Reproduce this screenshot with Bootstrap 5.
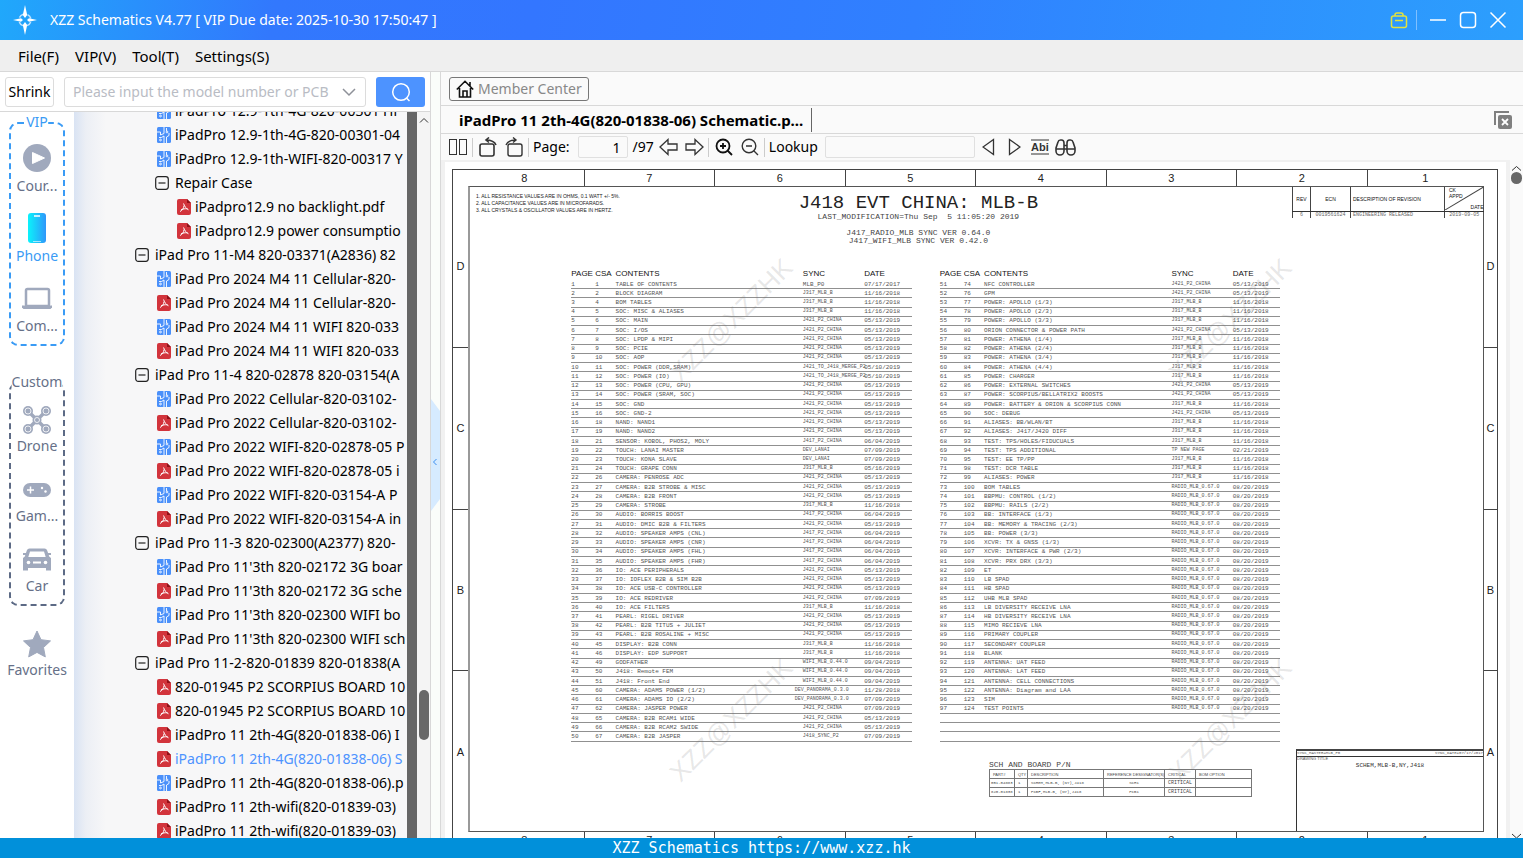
<!DOCTYPE html>
<html lang="en">
<head>
<meta charset="utf-8">
<meta name="viewport" content="width=device-width, initial-scale=1">
<title>XZZ Schematics V4.77</title>
<link href="https://cdn.jsdelivr.net/npm/bootstrap@5.3.0/dist/css/bootstrap.min.css" rel="stylesheet">
<style>
  body { font: 14px/20px "Noto Sans", "Open Sans", sans-serif; color: #000; background: #fff; }
  button, input { font: inherit; }
  svg { display: block; flex: none; }
  .line-b { border-bottom: 1px solid #d8d8d8; }
  .icon-btn { background: none; border: 0; padding: 0; color: #333; }

  .title-bar { height: 40px; background: linear-gradient(100deg, #20a8fb 0, #3278fd 18%, #3376ff 35%, #3080ff 60%, #2c9ffd 100%); color: #fff; font-size: 14px; }
  .title-bar .icon-btn { color: #fff; }
  .title-sep { width: 1px; height: 20px; background: #7fc0ff; }
  .menu-bar { height: 32px; background: #efefef; padding-left: 18px; gap: 16px; font-size: 15px; }
  .menu-bar a { color: #000; text-decoration: none; }

  .side-panel { width: 431px; border-right: 1px solid #d8d8d8; }
  .search-bar { height: 40px; padding: 0 5px; }
  .shrink-btn { width: 49px; height: 30px; border: 1px solid #dcdcdc; border-radius: 3px; background: #fff; padding: 0; }
  .model-box { height: 30px; margin: 0 10px; border: 1px solid #dcdcdc; border-radius: 3px; padding: 0 9px 0 8px; }
  .model-box input { border: 0; outline: 0; min-width: 0; padding: 0; color: #333; }
  .model-box input::placeholder { color: #b9bcc4; opacity: 1; }
  .search-btn { width: 49px; height: 30px; border: 0; border-radius: 3px; background: #4d93ff; color: #fff; }

  .cat-rail { width: 74px; padding: 10px 9px 0; color: #667088; }
  .cat-group { border: 2px dashed #5c6a85; border-radius: 9px; padding: 18px 0 6px; gap: 14px; }
  .cat-group.vip { border-color: #3a9bf5; }
  .cat-name { top: -12px; left: 50%; transform: translateX(-50%); background: #fff; line-height: 20px; }
  .vip .cat-name { color: #3a9bf5; }
  .cat-item { background: none; border: 0; padding: 0; color: inherit; line-height: 24px; }
  .cat-item svg { width: 32px; height: 32px; margin: 0 auto; color: #a0a9bd; }
  .cat-item.on { color: #3a9bf5; }
  .custom-group { margin-top: 36px; }
  .fav { margin-top: 20px; white-space: nowrap; }

  .tree-pane { background: linear-gradient(90deg, #d9e3f3 0, #eceff5 12px, #f7f7f8 32px); }
  .tree-list { list-style: none; margin: -13px 1px 0 0; padding: 0; }
  .tree-list li { height: 24px; gap: 4px; white-space: nowrap; }
  .lv1 { padding-left: 61px; }
  .lv2 { padding-left: 81px; }
  .leaf { padding-left: 83px; }
  .deep { padding-left: 103px; }
  .tree-list .lv1, .tree-list .lv2 { gap: 6px; }
  .chosen { color: #4d93ff; }
  .dark-bar { width: 10px; background: #666; }
  .scroll-col { width: 13px; background: #f4f4f4; }
  .scroll-thumb { width: 10px; height: 50px; border-radius: 5px; background: #686868; top: 578px; right: 1px; }
  .splitter { width: 9px; background: #fafdfa; }
  .split-grip { top: 298px; left: 0; }

  .doc-panel { border-left: 1px solid #d8d8d8; background: #fafafa; }
  .member-row { height: 34px; padding: 0 8px; }
  .member-btn { height: 24px; border: 1px solid #777; border-radius: 3px; background: #fafafa; color: #888; padding: 0 6px; gap: 4px; line-height: 20px; font-size: 14px; }
  .tab-row { height: 28px; padding-right: 10px; }
  .doc-tab { height: 24px; border: 0; border-right: 1px solid #666; background: none; font-weight: 700; font-size: 15px; padding: 0 8px 0 18px; }
  .tool-row { height: 26px; padding-left: 7px; gap: 5px; font-size: 14px; }
  .tool-sep { width: 1px; height: 19px; background: #ccc; margin: 0 -1px; }
  .tool-row input { height: 22px; border: 1px solid #e0e0e0; border-radius: 2px; background: #fafafa; padding: 0 6px; }
  .tool-row .page-no { width: 50px; text-align: right; margin-left: 3px; }
  .tool-row .look-for { width: 150px; margin: 0 2px; }

  .canvas-area { background: #f1f1f1; padding: 2px 4px 0; }
  .page-scroll { width: 13px; background: #fafafa; }
  .page-dot { width: 11px; height: 12px; border-radius: 6px; background: #686868; }

  .sheet { background: #fff; padding: 7px 8px 7px 7px; color: #222; }
  .sheet, .sans { font-family: "Liberation Sans", Arial, sans-serif; }
  .mono, .sheet .mono { font-family: "Liberation Mono", "Courier New", monospace; }
  .sheet-frame { border: 1px solid #444; }
  .zone-strip { display: grid; grid-template-columns: repeat(8, minmax(0, 1fr)); height: 16px; font-size: 11px; line-height: 16px; text-align: center; }
  .zone-strip span + span { border-left: 1px solid #444; }
  .zone-strip span:first-child { padding-left: 12px; }
  .zone-strip span:last-child { padding-right: 14px; }
  .zone-rail { width: 15px; font-size: 11px; }
  .zone-rail.right { width: 13px; }
  .zone-rail span { flex: 1 1 0; }
  .zone-rail span + span { border-top: 1px solid #444; }
  .drawing { border: 1px solid #555; border-left: 2px solid #999; }
  .head-grid { display: grid; grid-template-columns: 260fr 380fr 185fr 191px; height: 81px; }
  .notes { font-size: 5px; line-height: 7px; padding: 6px 0 0 6px; }
  .plan-title { font-size: 19px; line-height: 20px; margin: 6px 0 0; font-weight: 400; }
  .plan-sub { font-size: 8px; line-height: 8px; color: #444; }
  .mod-line { white-space: pre; }
  .rev-table { width: 191px; table-layout: fixed; font-size: 5px; line-height: 6px; border-collapse: collapse; }
  .rev-table th, .rev-table td { border-left: 1px solid #444; padding: 0 2px; font-weight: 400; white-space: nowrap; }
  .rev-table th { height: 24px; border-bottom: 1px solid #333; color: #111; }
  .rev-table td { height: 7px; color: #666; }
  .toc-wrap { padding: 0 20% 0 10%; gap: 28px; }
  .toc { table-layout: fixed; flex: 1 1 0; width: 0; height: 474px; border-collapse: collapse; font-size: 6px; line-height: 7px; color: #555; }
  .toc th { font-size: 8px; line-height: 10px; height: 12px; font-weight: 400; padding: 0; color: #111; font-family: "Liberation Sans", Arial, sans-serif; white-space: nowrap; }
  .toc td { padding: 0; white-space: nowrap; border-bottom: 1px solid #909090; }
  .toc .tiny { font-size: 5px; }
  .toc .pulled span { margin-left: -8px; }
  .foot-row { margin-top: 7px; }
  .pn-block { margin-left: auto; margin-right: 44px; padding-top: 11px; }
  .pn-title { font-size: 8px; line-height: 9px; color: #444; }
  .pn-table { width: 262px; table-layout: fixed; border-collapse: collapse; font-size: 4px; line-height: 5px; color: #444; }
  .pn-table th, .pn-table td { border: 1px solid #777; height: 9px; padding: 0 3px; font-weight: 400; white-space: nowrap; }
  .pn-table td:first-child { padding: 0 1px; }
  .pn-table .crit { font-size: 5px; }
  .title-block { width: 187px; height: 82px; border-left: 1px solid #333; border-top: 2px solid #444; font-size: 4px; line-height: 4px; color: #555; }
  .title-block .strip { border-bottom: 1px solid #333; height: 6px; }
  .title-block .sheet-name { font-size: 6px; line-height: 10px; color: #333; }
  .stamp { font-size: 26px; line-height: 26px; color: rgba(110,110,110,.17); transform: translate(-50%, -50%) rotate(-45deg); pointer-events: none; }
  .stamp.west { left: 27%; }
  .stamp.east { left: 74%; }
  .stamp.north { top: 158px; }
  .stamp.south { top: 558px; }
  .status-bar { height: 20px; background: #0190da; color: #fff; font: 15px/20px "DejaVu Sans Mono", monospace; }
</style>
</head>
<body class="vh-100 d-flex flex-column overflow-hidden">
<svg class="d-none" aria-hidden="true">
  <symbol id="i-pcb" viewBox="0 0 14 16"><rect width="14" height="16" rx="1.500" fill="#4a90fa"/><g fill="none" stroke="#fff" stroke-width=".9"><path d="M0 5h3.500V8L7 6.500V0M2 10.500h2.500L7 9V16M9.500 1v3M9.500 16V10L12 8.500V6"/><circle cx="10" cy="5" r=".9"/><circle cx="3.500" cy="13" r=".9"/></g></symbol>
  <symbol id="i-pdf" viewBox="0 0 14 16"><path d="M2 0h8l4 4v10a2 2 0 0 1-2 2H2a2 2 0 0 1-2-2V2a2 2 0 0 1 2-2z" fill="#d2343c"/><path d="M10 0v4h4z" fill="#8f1118"/><path d="M6.500 4.500c1.500 3.500 2.500 5 5 6.300M7 6.500c-.2 2.800-1.500 4.800-4 6M4 10.800c2-.9 4-1.200 6.500-1" fill="none" stroke="#fff" stroke-width="1"/></symbol>
  <symbol id="i-minus" viewBox="0 0 14 14"><rect x=".7" y=".7" width="12.600" height="12.600" rx="2.500" fill="none" stroke="#222" stroke-width="1.200"/><path d="M3.500 7h7" stroke="#222" stroke-width="1.200"/></symbol>
</svg>

<header class="title-bar d-flex align-items-center px-2 flex-shrink-0">
  <svg class="ms-1" width="26" height="30" viewBox="0 0 26 30"><circle cx="13" cy="15" r="6" fill="none" stroke="#bfe2ff" stroke-width="1.500" stroke-dasharray="5 4.400" stroke-dashoffset="-2"/><path d="M13 0l2.200 10L13 13l-2.200-3zM13 30l2.200-10L13 17l-2.200 3zM1 15l8-1.800L11 15l-2 1.800zM25 15l-8-1.800L15 15l2 1.800z" fill="#fff"/></svg>
  <span class="ms-2 ps-1">XZZ Schematics V4.77 [ VIP Due date: 2025-10-30 17:50:47 ]</span>
  <div class="d-flex align-items-center ms-auto pe-2">
    <button class="icon-btn" aria-label="Toolbox"><svg width="18" height="18" viewBox="0 0 18 18" fill="none" stroke="#e3e23c" stroke-width="1.500"><rect x="1.500" y="5" width="15" height="11.500" rx="2"/><path d="M5 5V4a2 2 0 0 1 2-2h4a2 2 0 0 1 2 2v1M5 9.500h8"/></svg></button>
    <span class="title-sep ms-2 me-2"></span>
    <button class="icon-btn ms-1" aria-label="Minimize"><svg width="18" height="18" viewBox="0 0 18 18"><path d="M1 9h16" stroke="currentColor" stroke-width="1.500"/></svg></button>
    <button class="icon-btn ms-2 ps-1" aria-label="Maximize"><svg width="18" height="18" viewBox="0 0 18 18"><rect x="1.500" y="1.500" width="15" height="15" rx="3" fill="none" stroke="currentColor" stroke-width="1.500"/></svg></button>
    <button class="icon-btn ms-2 ps-1" aria-label="Close"><svg width="18" height="18" viewBox="0 0 18 18"><path d="M1.500 1.500l15 15M16.500 1.500l-15 15" stroke="currentColor" stroke-width="1.500"/></svg></button>
  </div>
</header>
<nav class="menu-bar line-b d-flex align-items-center flex-shrink-0">
  <a href="#">File(F)</a><a href="#">VIP(V)</a><a href="#">Tool(T)</a><a href="#">Settings(S)</a>
</nav>

<div class="d-flex flex-grow-1 overflow-hidden">
  <aside class="side-panel d-flex flex-column flex-shrink-0">
    <div class="search-bar line-b d-flex align-items-center flex-shrink-0">
      <button class="shrink-btn">Shrink</button>
      <div class="model-box d-flex align-items-center flex-grow-1">
        <input class="flex-grow-1" aria-label="Model number or PCB" placeholder="Please input the model number or PCB">
        <button class="icon-btn" aria-label="Show history"><svg width="14" height="10" viewBox="0 0 14 10"><path d="M1 2l6 6 6-6" fill="none" stroke="#8e9199" stroke-width="1.500"/></svg></button>
      </div>
      <button class="search-btn" aria-label="Search"><svg class="mx-auto" width="20" height="20" viewBox="0 0 20 20"><circle cx="10" cy="10" r="8.300" fill="none" stroke="#fff" stroke-width="1.500"/><path d="M15.500 16l3 3" stroke="#fff" stroke-width="1.500"/></svg></button>
    </div>
    <div class="d-flex flex-grow-1 overflow-hidden">
      <div class="cat-rail flex-shrink-0">
        <div class="cat-group vip d-flex flex-column position-relative">
          <span class="cat-name position-absolute">VIP</span>
          <button class="cat-item"><svg viewBox="0 0 32 32"><circle cx="16" cy="16" r="14" fill="currentColor"/><path d="M11.500 10.500v11l12-5.500z" fill="#fff" stroke="#fff" stroke-linejoin="round"/></svg>Cour...</button>
          <button class="cat-item on"><svg viewBox="0 0 32 32"><defs><linearGradient id="ph"><stop stop-color="#0bf3fb"/><stop offset="1" stop-color="#2f97fa"/></linearGradient></defs><rect x="7" y="1" width="18" height="30" rx="3" fill="url(#ph)"/><path d="M13 4h6" stroke="#fff" stroke-width="1.500"/><path d="M12 29.500h8" stroke="#fff" stroke-width=".6"/></svg>Phone</button>
          <button class="cat-item"><svg viewBox="0 0 32 32"><rect x="5" y="7" width="23" height="17" rx="1.500" fill="none" stroke="currentColor" stroke-width="2.500"/><path d="M1 23.500h30v2l-1.500 1.500h-27L1 25.500z" fill="currentColor"/></svg>Com...</button>
        </div>
        <div class="cat-group custom-group d-flex flex-column position-relative">
          <span class="cat-name position-absolute">Custom</span>
          <button class="cat-item"><svg viewBox="0 -2 32 32"><path d="M8 8l16 16M24 8L8 24" stroke="currentColor" stroke-width="3.500"/><g fill="currentColor"><circle cx="7" cy="7" r="5"/><circle cx="25" cy="7" r="5"/><circle cx="7" cy="25" r="5"/><circle cx="25" cy="25" r="5"/><circle cx="16" cy="16" r="4.500"/></g><g fill="none" stroke="#fff" stroke-width=".8"><circle cx="7" cy="7" r="3"/><circle cx="25" cy="7" r="3"/><circle cx="7" cy="25" r="3"/><circle cx="25" cy="25" r="3"/><circle cx="16" cy="16" r="2.500"/></g></svg>Drone</button>
          <button class="cat-item"><svg viewBox="0 -2 32 32"><rect x="2" y="9" width="28" height="14" rx="7" fill="currentColor"/><path d="M9.500 12.500v7M6 16h7" stroke="#fff" stroke-width="1.500"/><circle cx="21" cy="14" r="1.200" fill="#fff"/><circle cx="24.500" cy="17.500" r="1.200" fill="#fff"/></svg>Gam...</button>
          <button class="cat-item"><svg viewBox="0 -2 32 32"><path d="M8.500 4.500h15q2 0 2.700 2l2 6 1.800 1.500v12.500h-5V24H7v2.500H2V14l1.800-1.500 2-6q.7-2 2.700-2zM9 7.500l-1.700 5.500h17.400L23 7.500z" fill="currentColor" fill-rule="evenodd"/><path d="M2 10h4M26 10h4" stroke="currentColor" stroke-width="2"/><g fill="#fff"><circle cx="7.500" cy="18.500" r="1.800"/><circle cx="24.500" cy="18.500" r="1.800"/><rect x="12" y="17.500" width="8" height="2"/></g></svg>Car</button>
        </div>
        <div class="d-flex justify-content-center"><button class="cat-item fav"><svg viewBox="0 -2 32 32"><path d="M16 3l4 8.700 9.500 1.200-7 6.600 1.800 9.400L16 24.400l-8.300 4.500 1.800-9.400-7-6.600L12 11.700z" fill="currentColor" stroke="currentColor" stroke-linejoin="round"/></svg>Favorites</button></div>
      </div>
      <div class="tree-pane d-flex flex-grow-1 overflow-hidden">
        <ul class="tree-list flex-grow-1 overflow-hidden" id="tree"></ul>
        <div class="dark-bar flex-shrink-0"></div>
        <div class="scroll-col flex-shrink-0 position-relative">
          <svg class="mt-1 ms-auto me-auto" width="10" height="8" viewBox="0 0 10 8"><path d="M1 6.500l4-4 4 4" fill="none" stroke="#333"/></svg>
          <div class="scroll-thumb position-absolute"></div>
        </div>
      </div>
    </div>
  </aside>
  <div class="splitter flex-shrink-0 d-flex align-items-center">
    <svg width="9" height="112" viewBox="0 0 9 112"><path d="M0 0l9 12v88l-9 12z" fill="#d6ebff"/><path d="M5.500 60l-3 3 3 3" fill="none" stroke="#3a8df0"/></svg>
  </div>

  <main class="doc-panel d-flex flex-column flex-grow-1 overflow-hidden">
    <div class="member-row line-b d-flex align-items-center flex-shrink-0">
      <button class="member-btn d-flex align-items-center"><svg width="18" height="18" viewBox="0 0 18 18" fill="none" stroke="#111" stroke-width="1.600"><path d="M.8 9.500L9 1.300l8.200 8.200M3.500 8v9h11V8M7 17v-6h4v6M14 2v4"/></svg>Member Center</button>
    </div>
    <div class="tab-row line-b d-flex align-items-center flex-shrink-0">
      <button class="doc-tab">iPadPro 11 2th-4G(820-01838-06) Schematic.p...</button>
      <button class="icon-btn ms-auto" aria-label="Close all tabs"><svg width="20" height="20" viewBox="0 0 20 20"><path d="M2 15V2h14" fill="none" stroke="#808080" stroke-width="2"/><rect x="5" y="5" width="14" height="14" rx="2" fill="#808080"/><path d="M9 9l6 6M15 9l-6 6" stroke="#fff" stroke-width="1.800"/></svg></button>
    </div>
    <div class="tool-row d-flex align-items-center flex-shrink-0">
      <button class="icon-btn" aria-label="Two pages"><svg width="20" height="18" viewBox="0 0 20 18" fill="none" stroke="#333"><rect x="1.500" y="1.500" width="7" height="15"/><rect x="11.500" y="1.500" width="7" height="15"/></svg></button>
      <span class="tool-sep"></span>
      <button class="icon-btn" aria-label="Rotate left"><svg width="22" height="20" viewBox="0 0 22 20" fill="none" stroke="#333" stroke-width="1.600"><rect x="3" y="7" width="14" height="12" rx="2"/><path d="M19 8Q17 3 9 3M12 .5L9 3l3 2.500"/></svg></button>
      <button class="icon-btn" aria-label="Rotate right"><svg width="20" height="20" viewBox="0 0 20 20" fill="none" stroke="#333" stroke-width="1.400"><rect x="4" y="7" width="14" height="12" rx="2"/><path d="M2 8Q4 3 12 3M9 .5L12 3 9 5.500"/></svg></button>
      <span class="tool-sep"></span>
      <label for="pageNo">Page:</label>
      <input class="page-no" id="pageNo" value="1"><span>/97</span>
      <button class="icon-btn" aria-label="Previous page"><svg width="20" height="18" viewBox="0 0 20 18"><path d="M1 9l8-7.500V6h9v6H9v4.500z" fill="none" stroke="#333" stroke-width="1.300"/></svg></button>
      <button class="icon-btn" aria-label="Next page"><svg width="20" height="18" viewBox="0 0 20 18"><path d="M19 9l-8-7.500V6H2v6h9v4.500z" fill="none" stroke="#333" stroke-width="1.300"/></svg></button>
      <span class="tool-sep"></span>
      <button class="icon-btn" aria-label="Zoom in"><svg width="22" height="18" viewBox="-2 0 22 18" fill="none" stroke="#111" stroke-width="1.800"><circle cx="8" cy="8" r="6.500"/><path d="M12.500 12.500L17 17M8 5v6M5 8h6"/></svg></button>
      <button class="icon-btn" aria-label="Zoom out"><svg width="20" height="18" viewBox="-1 0 20 18" fill="none" stroke="#333" stroke-width="1.400"><circle cx="8" cy="8" r="6.800"/><path d="M12.500 12.500L17 17M5 8h6"/></svg></button>
      <span class="tool-sep"></span>
      <label for="lookFor">Lookup</label>
      <input class="look-for" id="lookFor">
      <button class="icon-btn" aria-label="Find previous"><svg width="13" height="18" viewBox="0 0 13 18"><path d="M11.500 1.500v15L1 9z" fill="none" stroke="#333" stroke-width="1.300"/></svg></button>
      <button class="icon-btn ms-2" aria-label="Find next"><svg width="13" height="18" viewBox="0 0 13 18"><path d="M1.500 1.500v15L12 9z" fill="none" stroke="#333" stroke-width="1.300"/></svg></button>
      <button class="icon-btn ms-1" aria-label="Whole word"><svg width="20" height="16" viewBox="0 0 20 16"><path d="M1 1h18M1 15h18" stroke="#333"/><text x="1" y="12" font-family="Liberation Sans" font-weight="700" font-size="11" fill="#333">Abi</text></svg></button>
      <button class="icon-btn" aria-label="Find all"><svg width="21" height="17" viewBox="0 0 21 17" fill="none" stroke="#333" stroke-width="1.600"><path d="M9 4v8a4 4 0 0 1-8 0V9l2-6q.5-2 2.500-2h1Q9 1 9 4zM12 4v8a4 4 0 0 0 8 0V9l-2-6q-.5-2-2.500-2h-1Q12 1 12 4zM9 6.500h3M1 10h19"/></svg></button>
    </div>

    <div class="d-flex flex-grow-1 overflow-hidden">
      <div class="canvas-area flex-grow-1 overflow-hidden">
        <div class="sheet position-relative">
          <div class="sheet-frame">
            <div class="zone-strip"><span>8</span><span>7</span><span>6</span><span>5</span><span>4</span><span>3</span><span>2</span><span>1</span></div>
            <div class="d-flex">
              <div class="zone-rail d-flex flex-column flex-shrink-0"><span class="d-flex align-items-center justify-content-center">D</span><span class="d-flex align-items-center justify-content-center">C</span><span class="d-flex align-items-center justify-content-center">B</span><span class="d-flex align-items-center justify-content-center">A</span></div>
              <div class="drawing flex-grow-1">
                <div class="head-grid">
                  <div class="notes">1. ALL RESISTANCE VALUES ARE IN OHMS, 0.1 WATT +/- 5%.<br>2. ALL CAPACITANCE VALUES ARE IN MICROFARADS.<br>3. ALL CRYSTALS &amp; OSCILLATOR VALUES ARE IN HERTZ.</div>
                  <div class="text-center mono text-nowrap">
                    <h1 class="plan-title">J418 EVT CHINA: MLB-B</h1>
                    <div class="plan-sub mod-line">LAST_MODIFICATION=Thu Sep  5 11:05:20 2019</div>
                    <div class="plan-sub mt-2">J417_RADIO_MLB SYNC VER 0.64.0<br>J417_WIFI_MLB SYNC VER 0.42.0</div>
                  </div>
                  <div></div>
                  <table class="rev-table align-self-start">
                    <colgroup><col width="18"><col width="40"><col width="94"><col width="39"></colgroup>
                    <thead><tr><th class="text-center">REV</th><th class="text-center">ECN</th><th>DESCRIPTION OF REVISION</th><th class="p-0"><div class="position-relative"><svg class="w-100" height="23" viewBox="0 0 38 23" preserveAspectRatio="none"><path d="M0 23L38 0" stroke="#444"/></svg><span class="position-absolute top-0 start-0 ps-1">CK<br>APPD</span><span class="position-absolute bottom-0 end-0">DATE</span></div></th></tr></thead>
                    <tbody class="mono"><tr><td class="text-center">6</td><td class="text-center">0019561624</td><td>ENGINEERING RELEASED</td><td class="text-center">2019-09-05</td></tr></tbody>
                  </table>
                </div>
                <div class="toc-wrap d-flex">
                  <table class="toc mono" id="tocA"></table>
                  <table class="toc mono" id="tocB"></table>
                </div>
                <div class="foot-row d-flex">
                  <div class="pn-block">
                    <div class="pn-title mono">SCH AND BOARD P/N</div>
                    <table class="pn-table">
                      <colgroup><col width="25"><col width="13"><col width="76"><col width="61"><col width="31"><col width="56"></colgroup>
                      <thead><tr><th>PART#</th><th>QTY</th><th>DESCRIPTION</th><th>REFERENCE DESIGNATOR(S)</th><th>CRITICAL</th><th>BOM OPTION</th></tr></thead>
                      <tbody class="mono"><tr><td>051-04883</td><td>1</td><td>SCHEM,MLB-B, (NY),J418</td><td class="text-center">SCH1</td><td class="crit">CRITICAL</td><td></td></tr>
                      <tr><td>820-01838</td><td>1</td><td>PCBF,MLB-B, (NY),J418</td><td class="text-center">PCB1</td><td class="crit">CRITICAL</td><td></td></tr></tbody>
                    </table>
                  </div>
                  <div class="title-block mono flex-shrink-0">
                    <div class="strip d-flex justify-content-between"><span>SYNC_MASTER=MLB_P0</span><span>SYNC_DATE=07/17/2017</span></div>
                    <div class="sans">DRAWING TITLE</div>
                    <div class="sheet-name text-center">SCHEM,MLB-B,NY,J418</div>
                  </div>
                </div>
              </div>
              <div class="zone-rail right d-flex flex-column flex-shrink-0"><span class="d-flex align-items-center justify-content-center">D</span><span class="d-flex align-items-center justify-content-center">C</span><span class="d-flex align-items-center justify-content-center">B</span><span class="d-flex align-items-center justify-content-center">A</span></div>
            </div>
            <div class="zone-strip"><span>8</span><span>7</span><span>6</span><span>5</span><span>4</span><span>3</span><span>2</span><span>1</span></div>
          </div>
          <span class="stamp west north position-absolute">XZZ@XZZHK</span>
          <span class="stamp east north position-absolute">XZZ@XZZHK</span>
          <span class="stamp west south position-absolute">XZZ@XZZHK</span>
          <span class="stamp east south position-absolute">XZZ@XZZHK</span>
        </div>
      </div>
      <div class="page-scroll d-flex flex-column align-items-center flex-shrink-0">
        <svg class="mt-1" width="11" height="8" viewBox="0 0 11 8"><path d="M1 6.500l4.500-4 4.500 4" fill="none" stroke="#333"/></svg>
        <div class="page-dot"></div>
        <svg class="mt-auto" width="11" height="5" viewBox="0 0 11 5"><path d="M1 1l4.500 4L10 1" fill="none" stroke="#333"/></svg>
      </div>
    </div>
  </main>
</div>
<footer class="status-bar text-center flex-shrink-0">XZZ Schematics https://www.xzz.hk</footer>

<script src="https://cdn.jsdelivr.net/npm/bootstrap@5.3.0/dist/js/bootstrap.bundle.min.js"></script>
<script>
  // kind | label: b = board file, p = PDF, g = group, s = sub-group, q = PDF inside a sub-group, c = chosen PDF
  const tree = `b|iPadPro 12.9-1th-4G-820-00301 Hi
b|iPadPro 12.9-1th-4G-820-00301-04
b|iPadPro 12.9-1th-WIFI-820-00317 Y
s|Repair Case
q|iPadpro12.9 no backlight.pdf
q|iPadpro12.9 power consumptio
g|iPad Pro 11-M4 820-03371(A2836) 82
b|iPad Pro 2024 M4 11 Cellular-820-
p|iPad Pro 2024 M4 11 Cellular-820-
b|iPad Pro 2024 M4 11 WIFI 820-033
p|iPad Pro 2024 M4 11 WIFI 820-033
g|iPad Pro 11-4 820-02878 820-03154(A
b|iPad Pro 2022 Cellular-820-03102-
p|iPad Pro 2022 Cellular-820-03102-
b|iPad Pro 2022 WIFI-820-02878-05 P
p|iPad Pro 2022 WIFI-820-02878-05 i
b|iPad Pro 2022 WIFI-820-03154-A P
p|iPad Pro 2022 WIFI-820-03154-A in
g|iPad Pro 11-3 820-02300(A2377) 820-
b|iPad Pro 11'3th 820-02172 3G boar
p|iPad Pro 11'3th 820-02172 3G sche
b|iPad Pro 11'3th 820-02300 WIFI bo
p|iPad Pro 11'3th 820-02300 WIFI sch
g|iPad Pro 11-2-820-01839 820-01838(A
p|820-01945 P2 SCORPIUS BOARD 10
p|820-01945 P2 SCORPIUS BOARD 10
p|iPadPro 11 2th-4G(820-01838-06) I
c|iPadPro 11 2th-4G(820-01838-06) S
b|iPadPro 11 2th-4G(820-01838-06).p
p|iPadPro 11 2th-wifi(820-01839-03)
p|iPadPro 11 2th-wifi(820-01839-03)`;
  const cls = { b: 'leaf', p: 'leaf', c: 'leaf chosen', q: 'deep', g: 'lv1', s: 'lv2' };
  document.getElementById('tree').innerHTML = tree.split('\n').map(r => {
    const [k, t] = r.split('|');
    const icon = k === 'b' ? '<svg width="14" height="16"><use href="#i-pcb"/></svg>'
      : 'gs'.includes(k) ? '<svg width="14" height="14"><use href="#i-minus"/></svg>'
      : '<svg width="14" height="16"><use href="#i-pdf"/></svg>';
    return `<li class="d-flex align-items-center ${cls[k]}">${icon}<span>${t}</span></li>`;
  }).join('');

  // sync owners and dates that many rows share
  const S = { A: 'J317_MLB_B', C: 'J421_P2_CHINA', D: 'J417_P2_CHINA', W: 'WIFI_MLB_0.44.0', R: 'RADIO_MLB_0.67.0', N: 'DEV_PANORAMA_0.3.0', L: 'DEV_LANAI', M: 'J421_TO_J418_MERGE_P2' };
  const T = { a: '11/16/2018', b: '05/13/2019', c: '06/04/2019', d: '07/09/2019', e: '05/10/2019', f: '09/04/2019', g: '08/20/2019', h: '05/16/2019' };
  const left = `1|TABLE OF CONTENTS|MLB_P0|07/17/2017
2|BLOCK DIAGRAM|A|a
4|BOM TABLES|A|a
5|SOC: MISC & ALIASES|A|a
6|SOC: MAIN|C|b
7|SOC: I/OS|C|b
8|SOC: LPDP & MIPI|C|b
9|SOC: PCIE|C|b
10|SOC: AOP|C|b
11|SOC: POWER (DDR,SRAM)|M|e
12|SOC: POWER (IO)|M|e
13|SOC: POWER (CPU, GPU)|C|b
14|SOC: POWER (SRAM, SOC)|C|b
15|SOC: GND|C|b
16|SOC: GND-2|C|b
18|NAND: NAND1|C|b
19|NAND: NAND2|C|b
21|SENSOR: KOBOL, PHOS2, MOLY|D|c
22|TOUCH: LANAI MASTER|L|d
23|TOUCH: KONA SLAVE|L|d
24|TOUCH: GRAPE CONN|A|h
26|CAMERA: PENROSE ADC|C|b
27|CAMERA: B2B STROBE & MISC|C|b
28|CAMERA: B2B FRONT|C|b
29|CAMERA: STROBE|A|a
30|AUDIO: BORRIS BOOST|D|c
31|AUDIO: DMIC B2B & FILTERS|C|b
32|AUDIO: SPEAKER AMPS (CNL)|D|c
33|AUDIO: SPEAKER AMPS (CNR)|D|c
34|AUDIO: SPEAKER AMPS (FHL)|D|c
35|AUDIO: SPEAKER AMPS (FHR)|D|c
36|IO: ACE PERIPHERALS|C|b
37|IO: IOFLEX B2B & SIM B2B|C|b
38|IO: ACE USB-C CONTROLLER|C|b
39|IO: ACE REDRIVER|C|d
40|IO: ACE FILTERS|A|a
41|PEARL: RIGEL DRIVER|C|b
42|PEARL: B2B TITUS + JULIET|C|b
43|PEARL: B2B ROSALINE + MISC|C|b
45|DISPLAY: B2B CONN|A|a
46|DISPLAY: EDP SUPPORT|A|a
49|GODFATHER|W|f
50|J418: Remote FEM|W|f
51|J418: Front End|W|f
60|CAMERA: ADAMS POWER (1/2)|N|11/28/2018
61|CAMERA: ADAMS IO (2/2)|N|d
62|CAMERA: JASPER POWER|C|d
65|CAMERA: B2B RCAM1 WIDE|C|b
66|CAMERA: B2B RCAM2 SWIDE|C|b
67|CAMERA: B2B JASPER|J418_SYNC_P2|d`;
  const right = `74|NFC CONTROLLER|C|b
76|GPM|C|b
77|POWER: APOLLO (1/3)|A|a
78|POWER: APOLLO (2/3)|A|a
79|POWER: APOLLO (3/3)|A|a
80|ORION CONNECTOR & POWER PATH|C|b
81|POWER: ATHENA (1/4)|A|a
82|POWER: ATHENA (2/4)|A|a
83|POWER: ATHENA (3/4)|A|a
84|POWER: ATHENA (4/4)|A|a
85|POWER: CHARGER|A|a
86|POWER: EXTERNAL SWITCHES|C|b
87|POWER: SCORPIUS/BELLATRIX2 BOOSTS|C|b
89|POWER: BATTERY & ORION & SCORPIUS CONN|A|a
90|SOC: DEBUG|C|b
91|ALIASES: BB/WLAN/BT|A|a
92|ALIASES: J417/J420 DIFF|A|a
93|TEST: TPS/HOLES/FIDUCUALS|A|a
94|TEST: TPS ADDITIONAL|TP NEW PAGE|02/21/2019
95|TEST: EE TP/PP|A|a
98|TEST: DCR TABLE|A|a
99|ALIASES: POWER|A|a
100|BOM TABLES|R|g
101|BBPMU: CONTROL (1/2)|R|g
102|BBPMU: RAILS (2/2)|R|g
103|BB: INTERFACE (1/3)|R|g
104|BB: MEMORY & TRACING (2/3)|R|g
105|BB: POWER (3/3)|R|g
106|XCVR: TX & GNSS (1/3)|R|g
107|XCVR: INTERFACE & PWR (2/3)|R|g
108|XCVR: PRX DRX (3/3)|R|g
109|ET|R|g
110|LB SPAD|R|g
111|HB SPAD|R|g
112|UHB MLB SPAD|R|g
113|LB DIVERSITY RECEIVE LNA|R|g
114|HB DIVERSITY RECEIVE LNA|R|g
115|MIMO RECIEVE LNA|R|g
116|PRIMARY COUPLER|R|g
117|SECONDARY COUPLER|R|g
118|BLANK|R|g
119|ANTENNA: UAT FEED|R|g
120|ANTENNA: LAT FEED|R|g
121|ANTENNA: CELL CONNECTIONS|R|g
122|ANTENNA: Diagram and LAA|R|g
123|SIM|R|g
124|TEST POINTS|R|g
|||
|||
|||`;
  function fill(id, text, first) {
    const head = '<colgroup><col style="width:7%"><col style="width:6%"><col style="width:55%"><col style="width:18%"><col style="width:14%"></colgroup><thead><tr><th>PAGE</th><th>CSA</th><th>CONTENTS</th><th>SYNC</th><th>DATE</th></tr></thead>';
    document.getElementById(id).innerHTML = head + '<tbody>' + text.split('\n').map((r, i) => {
      const [csa, name, s, d] = r.split('|');
      const c = (s === 'MLB_P0' ? '' : 'tiny') + (s === 'N' ? ' pulled' : '');
      return `<tr><td>${csa ? first + i : '&nbsp;'}</td><td>${csa}</td><td>${name.replace(/&/g, '&amp;')}</td><td class="${c}"><span>${S[s] || s}</span></td><td>${T[d] || d}</td></tr>`;
    }).join('') + '</tbody>';
  }
  fill('tocA', left, 1);
  fill('tocB', right, 51);
</script>
</body>
</html>
